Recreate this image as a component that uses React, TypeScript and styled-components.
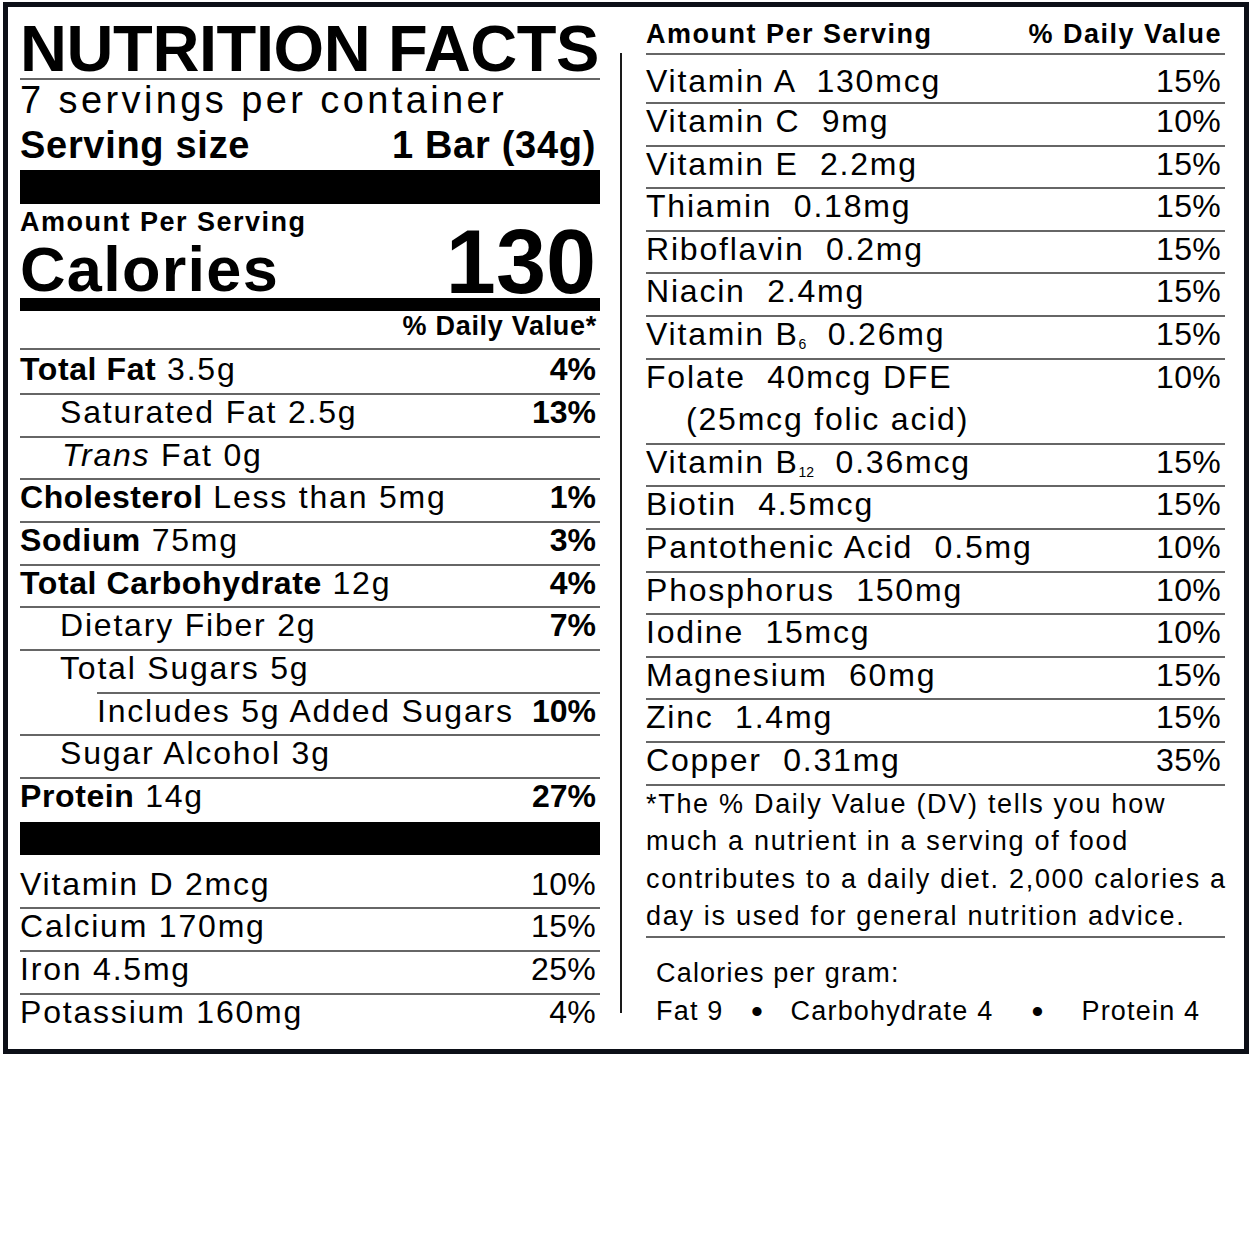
import React from 'react';
import styled, { createGlobalStyle } from 'styled-components';

const GlobalStyle = createGlobalStyle`
  html, body { margin: 0; padding: 0; background: #ffffff; }
  body { font-family: "Liberation Sans", Arial, Helvetica, sans-serif; color: #000; }
  * { box-sizing: border-box; }
`;

const LINE = '#666';

const Label = styled.div`
  width: 1246px;
  height: 1052px;
  margin: 2px 0 0 3px;
  border: 5px solid #0c0f17;
  padding: 0 19px 0 12px;
  display: grid;
  grid-template-columns: 580px 46px 579px;
`;

const LeftCol = styled.section`
  display: flex;
  flex-direction: column;
`;

const Title = styled.h1`
  margin: 0;
  padding-top: 13px;
  font-size: 65px;
  line-height: 58px;
  font-weight: 700;
  letter-spacing: -0.4px;
  white-space: nowrap;
  border-bottom: 2px solid ${LINE};
`;

const Servings = styled.div`
  font-size: 38px;
  line-height: 40px;
  letter-spacing: 3.4px;
  white-space: nowrap;
`;

const ServingSize = styled.div`
  display: flex;
  justify-content: space-between;
  font-size: 38px;
  line-height: 50px;
  font-weight: 700;
  letter-spacing: 0.7px;
  padding-right: 4px;
  white-space: nowrap;
`;

const Bar = styled.div<{ $h: number; $mt?: number }>`
  height: ${(p) => p.$h}px;
  margin-top: ${(p) => p.$mt ?? 0}px;
  background: #000;
`;

const CaloriesRow = styled.div`
  height: 94px;
  display: flex;
  justify-content: space-between;
  align-items: flex-end;
`;

const CaloriesLeft = styled.div`
  display: flex;
  flex-direction: column;
`;

const AmountLabel = styled.div<{ $lh: number }>`
  font-size: 27px;
  line-height: ${(p) => p.$lh}px;
  font-weight: 700;
  letter-spacing: 1.5px;
  white-space: nowrap;
`;

const CaloriesLabel = styled.div`
  font-size: 63px;
  line-height: 57px;
  font-weight: 700;
  letter-spacing: 1.3px;
`;

const CaloriesValue = styled.div`
  font-size: 90px;
  line-height: 72px;
  font-weight: 700;
  margin-right: 4px;
`;

const DVHeader = styled.div`
  text-align: right;
  font-size: 27px;
  line-height: 30px;
  font-weight: 700;
  letter-spacing: 0.7px;
  padding: 0 3px 7px 0;
`;

const Row = styled.div<{ $indent: number; $inset?: number; $pt?: number; $noLine?: boolean }>`
  display: flex;
  justify-content: space-between;
  align-items: flex-start;
  border-top: 2px solid ${(p) => (p.$noLine ? 'transparent' : LINE)};
  margin-left: ${(p) => p.$inset ?? 0}px;
  padding: ${(p) => p.$pt ?? 0}px 4px 0 ${(p) => p.$indent}px;
  height: ${(p) => 42.67 + (p.$pt ?? 0)}px;
  font-size: 32px;
  line-height: 34px;
  white-space: nowrap;
`;

const Name = styled.span`
  letter-spacing: 1.8px;
`;

const Strong = styled.b`
  font-weight: 700;
  letter-spacing: 0.6px;
`;

const Em = styled.i`
  font-style: italic;
`;

const Pct = styled.span<{ $bold?: boolean }>`
  font-weight: ${(p) => (p.$bold ? 700 : 400)};
  letter-spacing: ${(p) => (p.$bold ? 0 : 0.3)}px;
`;

const VitaminBlock = styled.div`
  padding-top: 10px;
  display: flex;
  flex-direction: column;
`;

const Divider = styled.div`
  width: 2px;
  margin: 46px 0 36px 20px;
  background: #1a1a1a;
`;

const RightCol = styled.section`
  display: flex;
  flex-direction: column;
`;

const RHeader = styled.div`
  display: flex;
  justify-content: space-between;
  padding: 12px 3px 4px 0;
  border-bottom: 2px solid ${LINE};
`;

const RRow = styled.div<{ $pt?: number; $pb?: number }>`
  display: flex;
  justify-content: space-between;
  align-items: flex-start;
  padding: ${(p) => p.$pt ?? 0}px 4px ${(p) => p.$pb ?? 6.6}px 0;
  border-bottom: 2px solid ${LINE};
  font-size: 32px;
  line-height: 34px;
  white-space: pre;
`;

const RName = styled.div`
  display: flex;
  flex-direction: column;
  letter-spacing: 1.8px;
`;

const SubLine = styled.span`
  margin-top: 8.6px;
  padding-left: 40px;
`;

const Sub = styled.sub`
  font-size: 14px;
  line-height: 0;
  vertical-align: -4px;
  letter-spacing: 0;
`;

const Footnote = styled.p`
  margin: 0;
  font-size: 27px;
  line-height: 37.5px;
  letter-spacing: 1.7px;
  white-space: nowrap;
  border-bottom: 2px solid ${LINE};
`;

const PerGram = styled.div`
  padding: 16.6px 0 0 10px;
  font-size: 27px;
  line-height: 38px;
  letter-spacing: 1.2px;
  white-space: nowrap;
`;

const PerGramLine = styled.div`
  display: flex;
`;

const Dot = styled.span<{ $w: number }>`
  width: ${(p) => p.$w}px;
  text-align: center;
  font-size: 34px;
  letter-spacing: 0;
`;

type LeftRow = {
  bold?: string;
  italic?: string;
  text: string;
  pct?: string;
  indent: number;
  inset?: number;
};

const leftRows: LeftRow[] = [
  { bold: 'Total Fat', text: ' 3.5g', pct: '4%', indent: 0 },
  { text: 'Saturated Fat 2.5g', pct: '13%', indent: 40 },
  { italic: 'Trans', text: ' Fat 0g', indent: 42 },
  { bold: 'Cholesterol', text: ' Less than 5mg', pct: '1%', indent: 0 },
  { bold: 'Sodium', text: ' 75mg', pct: '3%', indent: 0 },
  { bold: 'Total Carbohydrate', text: ' 12g', pct: '4%', indent: 0 },
  { text: 'Dietary Fiber 2g', pct: '7%', indent: 40 },
  { text: 'Total Sugars 5g', indent: 40 },
  { text: 'Includes 5g Added Sugars', pct: '10%', indent: 0, inset: 77 },
  { text: 'Sugar Alcohol 3g', indent: 40 },
  { bold: 'Protein', text: ' 14g', pct: '27%', indent: 0 },
];

const leftVitamins = [
  ['Vitamin D 2mcg', '10%'],
  ['Calcium 170mg', '15%'],
  ['Iron 4.5mg', '25%'],
  ['Potassium 160mg', '4%'],
];

type RightRow = { name: React.ReactNode; amount: string; pct: string; extra?: string };

const rightRows: RightRow[] = [
  { name: 'Vitamin A', amount: '130mcg', pct: '15%' },
  { name: 'Vitamin C', amount: '9mg', pct: '10%' },
  { name: 'Vitamin E', amount: '2.2mg', pct: '15%' },
  { name: 'Thiamin', amount: '0.18mg', pct: '15%' },
  { name: 'Riboflavin', amount: '0.2mg', pct: '15%' },
  { name: 'Niacin', amount: '2.4mg', pct: '15%' },
  { name: <>Vitamin B<Sub>6</Sub></>, amount: '0.26mg', pct: '15%' },
  { name: 'Folate', amount: '40mcg DFE', pct: '10%', extra: '(25mcg folic acid)' },
  { name: <>Vitamin B<Sub>12</Sub></>, amount: '0.36mcg', pct: '15%' },
  { name: 'Biotin', amount: '4.5mcg', pct: '15%' },
  { name: 'Pantothenic Acid', amount: '0.5mg', pct: '10%' },
  { name: 'Phosphorus', amount: '150mg', pct: '10%' },
  { name: 'Iodine', amount: '15mcg', pct: '10%' },
  { name: 'Magnesium', amount: '60mg', pct: '15%' },
  { name: 'Zinc', amount: '1.4mg', pct: '15%' },
  { name: 'Copper', amount: '0.31mg', pct: '35%' },
];

export default function App() {
  return (
    <>
      <GlobalStyle />
      <Label>
        <LeftCol>
          <Title>NUTRITION FACTS</Title>
          <Servings>7 servings per container</Servings>
          <ServingSize>
            <span>Serving size</span>
            <span>1 Bar (34g)</span>
          </ServingSize>
          <Bar $h={34} />
          <CaloriesRow>
            <CaloriesLeft>
              <AmountLabel $lh={37}>Amount Per Serving</AmountLabel>
              <CaloriesLabel>Calories</CaloriesLabel>
            </CaloriesLeft>
            <CaloriesValue>130</CaloriesValue>
          </CaloriesRow>
          <Bar $h={13} />
          <DVHeader>% Daily Value*</DVHeader>
          {leftRows.map((r, i) => (
            <Row key={i} $indent={r.indent} $inset={r.inset} $pt={i === 0 ? 2.33 : 0}>
              <Name>
                {r.bold && <Strong>{r.bold}</Strong>}
                {r.italic && <Em>{r.italic}</Em>}
                {r.text}
              </Name>
              {r.pct && <Pct $bold>{r.pct}</Pct>}
            </Row>
          ))}
          <Bar $h={33} $mt={2} />
          <VitaminBlock>
            {leftVitamins.map(([n, p], i) => (
              <Row key={n} $indent={0} $noLine={i === 0}>
                <Name>{n}</Name>
                <Pct>{p}</Pct>
              </Row>
            ))}
          </VitaminBlock>
        </LeftCol>
        <Divider />
        <RightCol>
          <RHeader>
            <AmountLabel $lh={30}>Amount Per Serving</AmountLabel>
            <AmountLabel $lh={30}>% Daily Value</AmountLabel>
          </RHeader>
          {rightRows.map((r, i) => (
            <RRow key={i} $pt={i === 0 ? 9 : 0} $pb={i === 0 ? 4 : 6.6}>
              <RName>
                <span>
                  {r.name}
                  {'  '}
                  {r.amount}
                </span>
                {r.extra && <SubLine>{r.extra}</SubLine>}
              </RName>
              <Pct>{r.pct}</Pct>
            </RRow>
          ))}
          <Footnote>
            *The % Daily Value (DV) tells you how
            <br />
            much a nutrient in a serving of food
            <br />
            contributes to a daily diet. 2,000 calories a
            <br />
            day is used for general nutrition advice.
          </Footnote>
          <PerGram>
            <div>Calories per gram:</div>
            <PerGramLine>
              <span>Fat 9</span>
              <Dot $w={67}>•</Dot>
              <span>Carbohydrate 4</span>
              <Dot $w={88}>•</Dot>
              <span>Protein 4</span>
            </PerGramLine>
          </PerGram>
        </RightCol>
      </Label>
    </>
  );
}
